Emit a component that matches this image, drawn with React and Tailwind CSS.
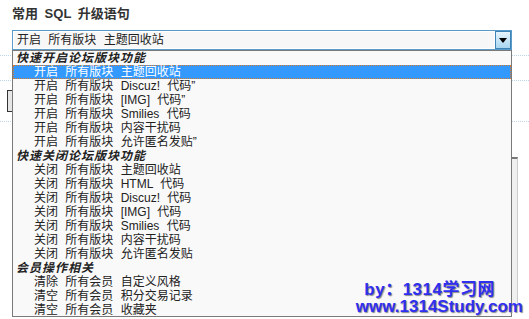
import React from "react";

const groups = [
  {
    title: "快速开启论坛版块功能",
    items: [
      "开启 所有版块 主题回收站",
      "开启 所有版块 Discuz! 代码”",
      "开启 所有版块 [IMG] 代码”",
      "开启 所有版块 Smilies 代码",
      "开启 所有版块 内容干扰码",
      "开启 所有版块 允许匿名发贴”",
    ],
  },
  {
    title: "快速关闭论坛版块功能",
    items: [
      "关闭 所有版块 主题回收站",
      "关闭 所有版块 HTML 代码",
      "关闭 所有版块 Discuz! 代码",
      "关闭 所有版块 [IMG] 代码",
      "关闭 所有版块 Smilies 代码",
      "关闭 所有版块 内容干扰码",
      "关闭 所有版块 允许匿名发贴",
    ],
  },
  {
    title: "会员操作相关",
    items: [
      "清除 所有会员 自定义风格",
      "清空 所有会员 积分交易记录",
      "清空 所有会员 收藏夹",
    ],
  },
];

function App() {
  const font = { fontFamily: '"Liberation Sans", "Noto Sans CJK SC", sans-serif' };

  return (
    <div
      className="relative w-[529px] h-[319px] overflow-hidden bg-white text-[12px] text-[#222]"
      style={font}
    >
      <div className="pt-[7px] pl-3 text-[13px] font-bold text-[#333] leading-[14px] [word-spacing:3px]">
        常用 SQL 升级语句
      </div>

      {/* select box */}
      <div className="mt-[9px] ml-3 w-[500px] h-[20px] flex border border-[#5b9bc8] bg-white">
        <div className="flex-1 m-px bg-[#f7f7f7] flex items-center pl-[3px] leading-none [word-spacing:4px]">
          开启 所有版块 主题回收站
        </div>
        <div className="w-[16px] h-[18px] border border-[#3f84b8] bg-gradient-to-b from-[#e6f4fc] to-[#a9d6f0] flex items-center justify-center">
          <svg width="8" height="5" viewBox="0 0 8 5">
            <path d="M0 0H8L4 5Z" fill="#000" />
          </svg>
        </div>
      </div>

      {/* page underneath */}
      <div className="mt-[5px] border-b border-dotted border-[#bcd6ea] h-[1px]" />
      <div className="mt-[24px] border-b border-dotted border-[#bcd6ea] h-[1px]" />
      <div className="mt-[9px] ml-[7px] w-[40px] h-[22px] border border-[#333] bg-[#e6e6e6]" />
      <div className="mt-[9px] border-b border-dotted border-[#bcd6ea] h-[1px]" />
      <div className="mt-[35px] ml-[480px] w-[38px] h-[146px] border-t-2 border-[#777] border-r border-r-[#ccc] bg-[#f0f0f0]" />

      {/* open dropdown list */}
      <div className="absolute left-3 top-[50px] w-[500px] h-[267px] border border-[#7a7a7a] bg-[#f9f9f9] overflow-hidden">
        {groups.map((g, gi) => (
          <div key={gi}>
            <div className="h-[14px] leading-[14px] pl-[3px] font-bold italic tracking-[1px] text-[#222]">
              {g.title}
            </div>
            {g.items.map((it, ii) => {
              const sel = gi === 0 && ii === 0;
              return (
                <div
                  key={ii}
                  className={
                    sel
                      ? "h-[14px] leading-[12px] pl-[20px] bg-[#3399ff] text-white border border-dotted border-[#d8782a] whitespace-pre [word-spacing:4px]"
                      : "h-[14px] leading-[14px] pl-[21px] text-[#222] whitespace-pre [word-spacing:4px]"
                  }
                >
                  {it}
                </div>
              );
            })}
          </div>
        ))}
      </div>

      {/* watermark */}
      <div className="absolute right-[6px] bottom-[3px] flex flex-col items-end font-bold text-[#2f2ff0] [text-shadow:1px_1px_1px_#8a8a8a]">
        <div className="text-[17px] leading-[17px] tracking-[0.5px] mr-[28px]">by：1314学习网</div>
        <div className="text-[17px] leading-[18px]">www.1314Study.com</div>
      </div>
    </div>
  );
}

export default App;
